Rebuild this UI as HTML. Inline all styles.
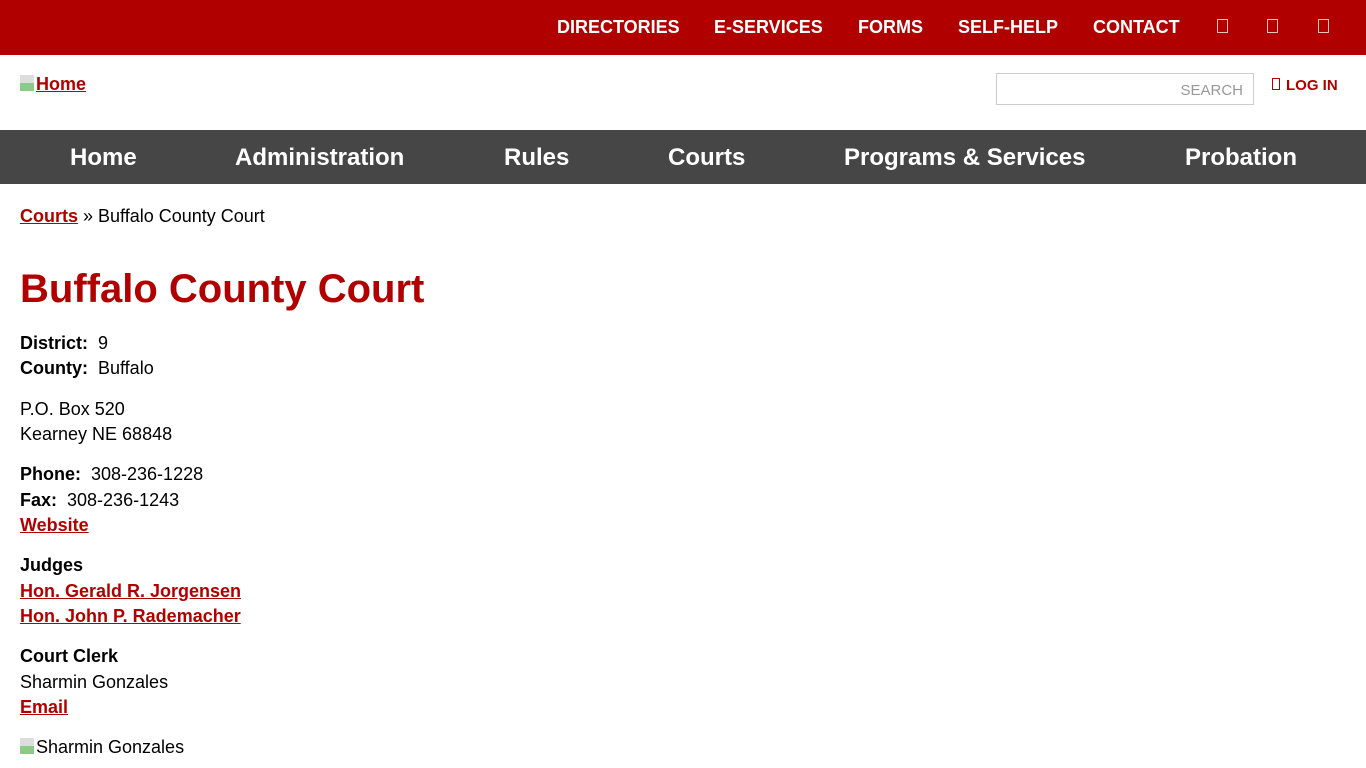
<!DOCTYPE html>
<html><head><meta charset="utf-8"><style>
body{margin:0;font-family:"Liberation Sans",Arial,sans-serif;color:#000;background:#fff;width:1366px;height:768px;overflow:hidden}
a{color:#b00000;font-weight:bold}
.top{height:55px;background:#b00000;position:relative}
.top span{position:absolute;top:17px;color:#fff;font-weight:bold;font-size:18px}
.sq{position:absolute;top:19px;width:9px;height:12px;border:1px solid #f4c0c0}
.hdr{height:75px;position:relative}
.nav{height:54px;background:#464646;position:relative}
.nav span{position:absolute;top:14px;color:#fff;font-weight:bold;font-size:24px}
.c{position:absolute;left:20px;font-size:18px}
p{margin:0}
.g{margin-top:14.8px}
</style></head><body>
<div class="top">
<span style="left:557px">DIRECTORIES</span>
<span style="left:714px">E-SERVICES</span>
<span style="left:858px">FORMS</span>
<span style="left:958px">SELF-HELP</span>
<span style="left:1093px">CONTACT</span>
<div class="sq" style="left:1217px"></div><div class="sq" style="left:1267px"></div><div class="sq" style="left:1318px"></div>
</div>
<div class="hdr">
<div style="position:absolute;left:20px;top:19px;font-size:18px"><span style="display:inline-block;width:14px;height:16px;background:linear-gradient(#ddd 50%,#8c8 50%);vertical-align:-1px;margin-right:2px"></span><a href="#">Home</a></div>
<div style="position:absolute;left:996px;top:18px;width:256px;height:30px;border:1px solid #ccc"><span style="position:absolute;right:10px;top:8px;color:#999;font-size:15px">SEARCH</span></div>
<div style="position:absolute;left:1272px;top:22px;color:#b00000;font-weight:bold;font-size:15px"><span style="display:inline-block;width:6px;height:10px;border:1px solid #b00000;margin-right:6px"></span>LOG IN</div>
</div>
<div class="nav">
<span style="left:70px">Home</span><span style="left:235px">Administration</span><span style="left:504px">Rules</span><span style="left:668px">Courts</span><span style="left:844px">Programs &amp; Services</span><span style="left:1185px">Probation</span>
</div>
<div class="c" style="top:206px"><a href="#">Courts</a> » Buffalo County Court</div>
<div class="c" style="top:267px;font-size:40px;font-weight:bold;color:#b00000">Buffalo County Court</div>
<div class="c" style="top:331px;line-height:25.4px">
<p><b>District:</b>&nbsp; 9</p><p><b>County:</b>&nbsp; Buffalo</p>
<p class="g">P.O. Box 520</p><p>Kearney NE 68848</p>
<p class="g"><b>Phone:</b>&nbsp; 308-236-1228</p><p><b>Fax:</b>&nbsp; 308-236-1243</p><p><a href="#">Website</a></p>
<p class="g"><b>Judges</b></p><p><a href="#">Hon. Gerald R. Jorgensen</a></p><p><a href="#">Hon. John P. Rademacher</a></p>
<p class="g"><b>Court Clerk</b></p><p>Sharmin Gonzales</p><p><a href="#">Email</a></p>
<p class="g"><span style="display:inline-block;width:14px;height:16px;background:linear-gradient(#ddd 50%,#8c8 50%);vertical-align:-1px;margin-right:2px"></span>Sharmin Gonzales</p>
</div>
</body></html>
